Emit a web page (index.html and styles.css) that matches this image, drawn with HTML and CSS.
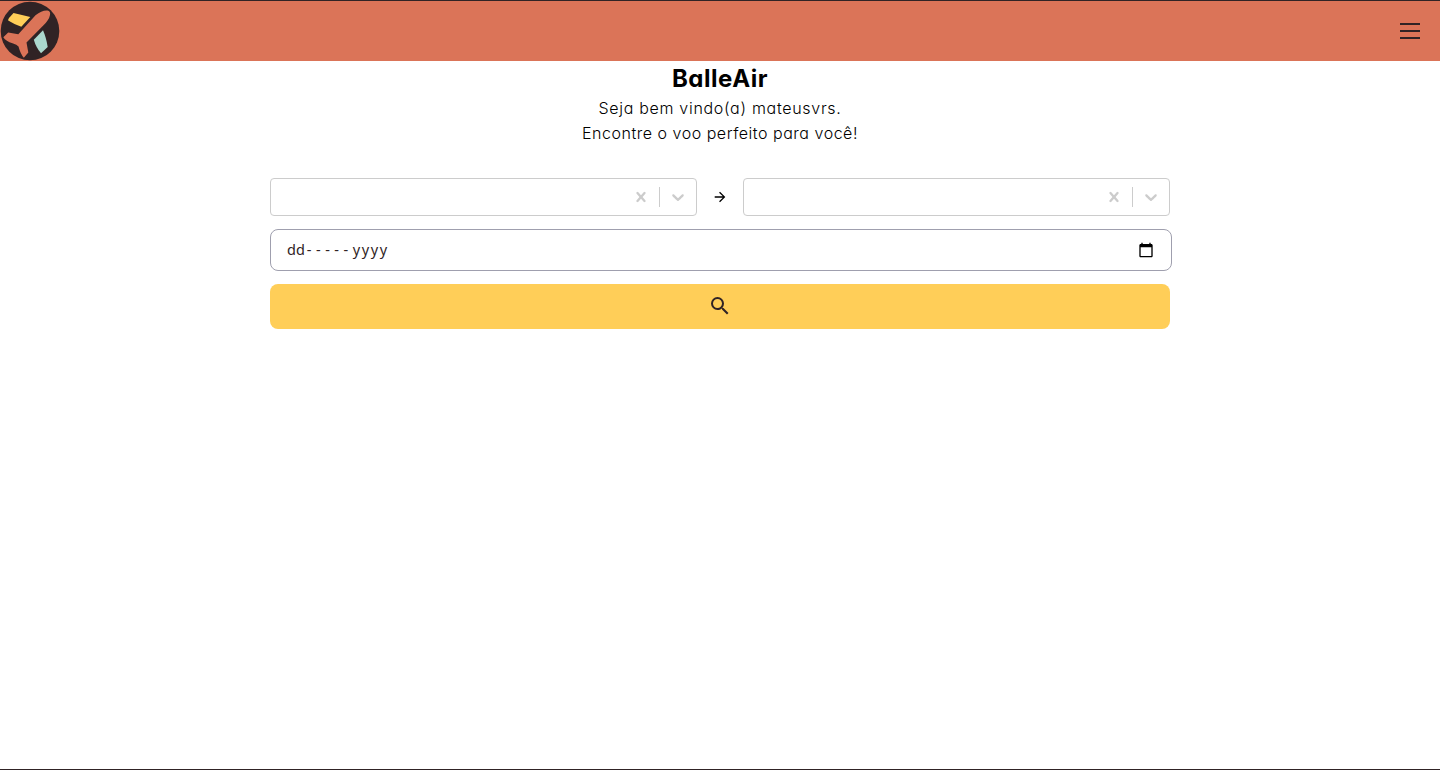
FILE: index.html
```html
<!DOCTYPE html>
<html lang="pt-BR">
<head>
<meta charset="utf-8">
<title>BalleAir</title>
<link rel="stylesheet" href="styles.css">
</head>
<body>
<div class="app">
  <header class="navbar">
    <svg class="logo" viewBox="0 0 60 60" aria-label="BalleAir">
      <circle cx="30" cy="30" r="29.3" fill="#302325"/>
      <path fill="#db7458" d="M35.500 14.200Q42 9 47.500 9.500Q50.800 10.200 50 14Q49 19 43.500 24.300L26.500 41.500L28.300 51.500L23.800 56.700Q20.500 53 18.500 45.500Q17 43.800 12.500 42.200Q6 40.500 3.300 36.300L8.200 31.600L18.300 33.300Z"/>
      <path fill="#ffce58" d="M13.500 12Q22 14 30.300 16L21.300 25.800Q14.500 23.500 8.200 19.500Q7.900 18.600 9 17Z"/>
      <path fill="#abd8ce" d="M43 29.300L33.800 38.800Q36.200 47 41 52.200L47.700 46Q46 36 43 29.300Z"/>
    </svg>
    <button class="menu" aria-label="Menu"><i></i><i></i><i></i></button>
  </header>
  <main class="content">
    <h1 class="title">BalleAir</h1>
    <p class="text welcome">Seja bem vindo(a) mateusvrs.</p>
    <p class="text tagline">Encontre o voo perfeito para você!</p>
    <form class="search">
      <div class="route">
        <div class="select">
          <svg class="clear" viewBox="0 0 20 20"><path d="M14.348 14.849c-.469.469-1.229.469-1.697 0L10 11.819l-2.651 3.029a1.2 1.2 0 1 1-1.697-1.697l2.758-3.150-2.759-3.152a1.2 1.2 0 1 1 1.697-1.697L10 8.183l2.651-3.031a1.2 1.2 0 1 1 1.697 1.697l-2.758 3.152 2.758 3.150c.469.469.469 1.229 0 1.698z"/></svg>
          <span class="divider"></span>
          <svg class="chevron" viewBox="0 0 20 20"><path d="M4.516 7.548c.436-.446 1.043-.481 1.576 0L10 11.295l3.908-3.747c.533-.481 1.141-.446 1.574 0 .436.445.408 1.197 0 1.615-.406.418-4.695 4.502-4.695 4.502a1.100 1.100 0 0 1-1.576 0S4.924 9.581 4.516 9.163s-.436-1.170 0-1.615z"/></svg>
        </div>
        <svg class="arrow" viewBox="0 0 16 16"><path d="m8 2.700-.93.930 3.700 3.700H2.700v1.340h8.070l-3.700 3.700.93.930L13.300 8z"/></svg>
        <div class="select">
          <svg class="clear" viewBox="0 0 20 20"><path d="M14.348 14.849c-.469.469-1.229.469-1.697 0L10 11.819l-2.651 3.029a1.2 1.2 0 1 1-1.697-1.697l2.758-3.150-2.759-3.152a1.2 1.2 0 1 1 1.697-1.697L10 8.183l2.651-3.031a1.2 1.2 0 1 1 1.697 1.697l-2.758 3.152 2.758 3.150c.469.469.469 1.229 0 1.698z"/></svg>
          <span class="divider"></span>
          <svg class="chevron" viewBox="0 0 20 20"><path d="M4.516 7.548c.436-.446 1.043-.481 1.576 0L10 11.295l3.908-3.747c.533-.481 1.141-.446 1.574 0 .436.445.408 1.197 0 1.615-.406.418-4.695 4.502-4.695 4.502a1.100 1.100 0 0 1-1.576 0S4.924 9.581 4.516 9.163s-.436-1.170 0-1.615z"/></svg>
        </div>
      </div>
      <div class="date">
        <span class="placeholder"><span>dd</span><span class="dashes">-----</span><span class="year">yyyy</span></span>
        <svg class="calendar" viewBox="0 0 24 24"><path d="M20 3h-1V1h-2v2H7V1H5v2H4c-1.100 0-2 .9-2 2v16c0 1.100.9 2 2 2h16c1.100 0 2-.9 2-2V5c0-1.100-.9-2-2-2zm0 18H4V8h16v13z"/></svg>
      </div>
      <button class="submit" type="button" aria-label="Buscar">
        <svg class="lens" viewBox="0 0 24 24"><path d="M15.500 14h-.79l-.28-.27A6.471 6.471 0 0 0 16 9.500 6.500 6.500 0 1 0 9.500 16c1.610 0 3.090-.59 4.230-1.570l.27.280v.79l5 4.990L20.490 19l-4.990-5zm-6 0C7.010 14 5 11.990 5 9.500S7.010 5 9.500 5 14 7.010 14 9.500 11.990 14 9.500 14z"/></svg>
      </button>
    </form>
  </main>
</div>
</body>
</html>
```
FILE: styles.css
```css
* { box-sizing: border-box; }
body { margin: 0; background: #fff; font-family: Inter, sans-serif; }
.app {
  height: 770px;
  border-top: 1px solid #302325;
  border-bottom: 1px solid #302325;
}
.navbar {
  height: 60px;
  display: flex;
  align-items: center;
  justify-content: space-between;
  padding-right: 20px;
  background: #db7458;
}
.logo { width: 60px; height: 60px; }
.menu {
  width: 20px;
  padding: 0;
  border: 0;
  background: none;
  display: flex;
  flex-direction: column;
  gap: 5px;
}
.menu i { height: 2px; background: #302325; }
.content {
  width: 900px;
  margin: 0 auto;
  text-align: center;
  color: #000;
  font-feature-settings: "cv11";
}
.title {
  margin: 0;
  font-size: 24px;
  line-height: 36px;
  font-weight: 700;
  letter-spacing: 0.550px;
}
.text {
  margin: 0;
  font-size: 16px;
  line-height: 25px;
  font-weight: 300;
}
.welcome { margin-top: -1px; letter-spacing: 0.700px; }
.tagline { letter-spacing: 0.520px; }
.search {
  margin-top: 32px;
  display: flex;
  flex-direction: column;
}
.route { display: flex; align-items: center; }
.select {
  flex: 1;
  height: 38px;
  display: flex;
  align-items: center;
  justify-content: flex-end;
  border: 1px solid #ccc;
  border-radius: 4px;
  padding-right: 8px;
  fill: #ccc;
}
.clear, .chevron { width: 20px; height: 20px; }
.divider { width: 1px; height: 20px; margin: 0 8px; background: #ccc; }
.arrow { width: 16px; height: 16px; margin: 0 15px; }
.date {
  width: 902px;
  height: 42px;
  margin-top: 13px;
  padding: 0 17px 1px 16px;
  display: flex;
  align-items: center;
  justify-content: space-between;
  border: 1px solid #9f9fae;
  border-radius: 8px;
  color: #302325;
}
.placeholder {
  display: flex;
  font: 15px/20px "Noto Sans", sans-serif;
  font-size: 14.500px;
  padding-bottom: 1px;
}
.dashes { letter-spacing: 4.500px; margin-left: 2px; }
.year { letter-spacing: 1.600px; }
.calendar { width: 16px; height: 16px; fill: #000; }
.submit {
  height: 45px;
  margin-top: 13px;
  padding: 0 0 2px;
  display: flex;
  align-items: center;
  justify-content: center;
  border: 0;
  border-radius: 8px;
  background: #ffce58;
}
.lens { width: 24px; height: 24px; fill: #302325; }
```
